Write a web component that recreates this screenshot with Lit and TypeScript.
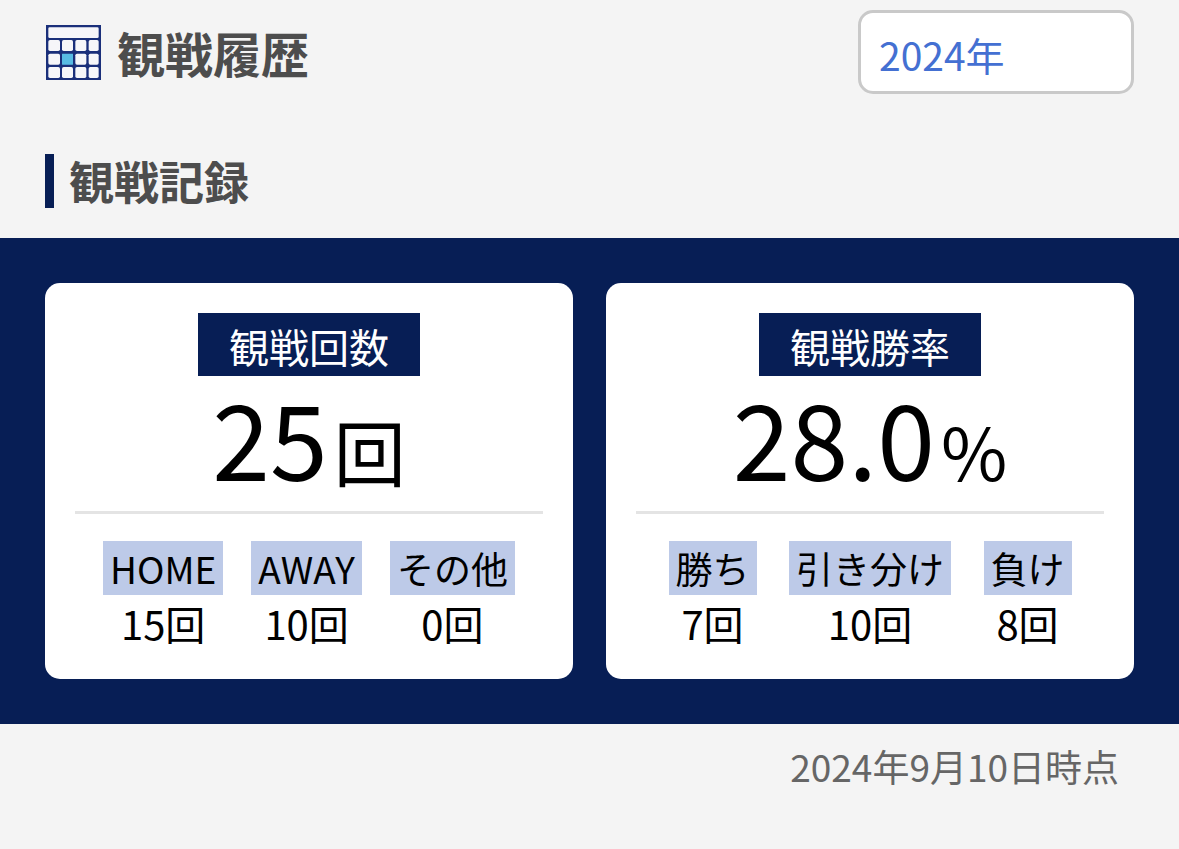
import { LitElement, html, svg, css } from "lit";
import { customElement, property } from "lit/decorators.js";

interface Breakdown {
  label: string;
  value: string;
}

@customElement("calendar-icon")
class CalendarIcon extends LitElement {
  static styles = css`
    :host {
      display: block;
      flex: none;
      width: 56px;
      height: 56px;
    }
    svg {
      display: block;
      width: 100%;
      height: 100%;
    }
    .frame {
      fill: #1a2f7a;
    }
    .cell {
      fill: #f6f6f9;
    }
    .active {
      fill: #58bbe3;
    }
  `;

  render() {
    const columns = [7, 48, 88, 128];
    const rows = [45, 86, 126];
    return html`
      <svg viewBox="-3 -3 168 168" aria-hidden="true">
        <rect class="frame" width="165" height="165" />
        <rect class="cell" x="7" y="7" width="151" height="32" rx="4" />
        ${rows.map((y, r) =>
          columns.map((x, c) => {
            const active = r === 1 && c === 1;
            return svg`<rect class=${active ? "active" : "cell"} x=${x} y=${y}
              width=${c === 0 ? 35 : c === 3 ? 30 : 33} height="33" rx=${active ? 1 : 5} />`;
          }),
        )}
      </svg>
    `;
  }
}

@customElement("stat-card")
class StatCard extends LitElement {
  @property() heading = "";
  @property() amount = "";
  @property() unit = "";
  @property({ attribute: false }) items: Breakdown[] = [];

  static styles = css`
    :host {
      display: flex;
      flex-direction: column;
      align-items: center;
      padding: 30px 30px 28px;
      border-radius: 15px;
      background: #fff;
      color: #000;
    }
    .heading {
      margin: 0;
      padding: 3px 31px 0;
      background: #071e55;
      color: #fff;
      font-size: 40px;
      font-weight: 400;
      line-height: 60px;
    }
    .total {
      display: flex;
      align-items: baseline;
      justify-content: center;
      gap: 6px;
      align-self: stretch;
      margin: 0;
      padding-bottom: 15px;
      border-bottom: 3px solid #e4e4e4;
    }
    .amount {
      font-size: 104px;
      line-height: 120px;
    }
    .unit {
      font-size: 72px;
      line-height: 72px;
    }
    .breakdown {
      display: flex;
      justify-content: space-evenly;
      align-self: stretch;
      margin: 27px 0 0;
    }
    .item {
      text-align: center;
    }
    .label {
      padding: 0 7px;
      background: #bdcae8;
      font-size: 37px;
      line-height: 54px;
    }
    .value {
      margin: 0;
      font-size: 40px;
      line-height: 56px;
    }
  `;

  render() {
    return html`
      <h3 class="heading">${this.heading}</h3>
      <p class="total">
        <span class="amount">${this.amount}</span><span class="unit">${this.unit}</span>
      </p>
      <dl class="breakdown">
        ${this.items.map(
          (item) => html`
            <div class="item">
              <dt class="label">${item.label}</dt>
              <dd class="value">${item.value}</dd>
            </div>
          `,
        )}
      </dl>
    `;
  }
}

@customElement("app-root")
class AppRoot extends LitElement {
  static styles = css`
    :host {
      display: block;
      min-height: 100vh;
      background: #f4f4f4;
      color: #4d4d4d;
      font-family: "Noto Sans CJK JP", sans-serif;
    }
    .header {
      display: flex;
      align-items: center;
      justify-content: space-between;
      padding: 10px 45px 0;
    }
    .brand {
      display: flex;
      align-items: center;
      gap: 16px;
    }
    .title {
      margin: 0;
      font-size: 48px;
      font-weight: 700;
      line-height: 72px;
    }
    .year {
      appearance: none;
      box-sizing: border-box;
      width: 276px;
      height: 84px;
      padding: 3px 18px 0;
      border: 3px solid #c9c9c9;
      border-radius: 15px;
      background: #fff;
      color: #4470d2;
      font-family: inherit;
      font-size: 39px;
    }
    .section-title {
      margin: 60px 45px 30px;
      padding-left: 15px;
      border-left: 9px solid #071e55;
      font-size: 45px;
      font-weight: 700;
      line-height: 54px;
    }
    .cards {
      display: grid;
      grid-template-columns: 1fr 1fr;
      gap: 33px;
      padding: 45px;
      background: #071e55;
    }
    .as-of {
      margin: 0;
      padding: 15px 60px;
      color: #666;
      font-size: 37px;
      line-height: 54px;
      text-align: right;
    }
  `;

  private visits: Breakdown[] = [
    { label: "HOME", value: "15回" },
    { label: "AWAY", value: "10回" },
    { label: "その他", value: "0回" },
  ];

  private results: Breakdown[] = [
    { label: "勝ち", value: "7回" },
    { label: "引き分け", value: "10回" },
    { label: "負け", value: "8回" },
  ];

  render() {
    return html`
      <header class="header">
        <div class="brand">
          <calendar-icon></calendar-icon>
          <h1 class="title" id="title">観戦履歴</h1>
        </div>
        <select class="year" aria-labelledby="title">
          <option selected>2024年</option>
        </select>
      </header>
      <main>
        <h2 class="section-title">観戦記録</h2>
        <div class="cards">
          <stat-card heading="観戦回数" amount="25" unit="回" .items=${this.visits}></stat-card>
          <stat-card heading="観戦勝率" amount="28.0" unit="%" .items=${this.results}></stat-card>
        </div>
        <p class="as-of">2024年9月10日時点</p>
      </main>
    `;
  }
}
